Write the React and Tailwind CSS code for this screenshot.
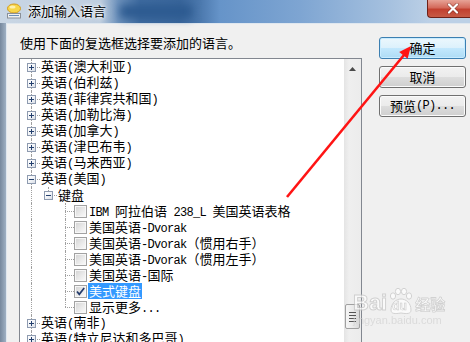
import React from "react";

const MONO = "font-['Liberation_Mono',monospace] text-[12px] leading-[16px] tracking-[-0.7px]";

function T({ s }) {
  const parts = s.split(/([\x20-\x7e]+)/).filter(Boolean);
  return parts.map((p, i) =>
    /^[\x20-\x7e]+$/.test(p) ? (
      <span key={i} className={MONO}>{p}</span>
    ) : (
      <span key={i}>{p}</span>
    )
  );
}

function Cell({ v, h, exp }) {
  return (
    <span className="relative w-[17px] h-[16px] shrink-0">
      {v === "full" && <span className="absolute left-[8px] top-0 bottom-0 border-l border-dotted border-[#a0a0a0]" />}
      {v === "half" && <span className="absolute left-[8px] top-0 h-[8px] border-l border-dotted border-[#a0a0a0]" />}
      {h && <span className="absolute left-[8px] right-0 top-[8px] border-t border-dotted border-[#a0a0a0]" />}
      {exp && (
        <span className="absolute left-[4px] top-[4px] w-[9px] h-[9px] border border-[#8e9bb0] bg-[linear-gradient(135deg,#ffffff_0%,#f2f4f7_50%,#d9dee6_100%)]">
          <span className="absolute left-[1px] top-[3px] w-[5px] h-px bg-[#24406e]" />
          {exp === "+" && <span className="absolute left-[3px] top-[1px] w-px h-[5px] bg-[#24406e]" />}
        </span>
      )}
    </span>
  );
}

function Check({ checked }) {
  return (
    <span className="relative w-[13px] h-[13px] shrink-0 border border-[#a2a2a2] bg-[#f7f7f7]">
      <span className="absolute inset-[1px] bg-[linear-gradient(135deg,#d6d6d6_0%,#e8e8e8_50%,#f8f8f8_100%)]" />
      {checked && (
        <svg className="absolute left-0 top-0" width="11" height="11" viewBox="0 0 11 11">
          <path d="M2 5.5 L4.3 8.3 L9.2 2" fill="none" stroke="#223a6a" strokeWidth="1.7" />
        </svg>
      )}
    </span>
  );
}

const roots1 = ["英语(澳大利亚)", "英语(伯利兹)", "英语(菲律宾共和国)", "英语(加勒比海)", "英语(加拿大)", "英语(津巴布韦)", "英语(马来西亚)"];
const leaves = [
  "IBM 阿拉伯语 238_L 美国英语表格",
  "美国英语-Dvorak",
  "美国英语-Dvorak（惯用右手）",
  "美国英语-Dvorak（惯用左手）",
  "美国英语-国际",
  "美式键盘",
  "显示更多...",
];
const roots2 = ["英语(南非)", "英语(特立尼达和多巴哥)"];

function RootRow({ text, open }) {
  return (
    <div className="flex items-center h-[16px] shrink-0">
      <Cell v="full" h exp={open ? "-" : "+"} />
      <span className="ml-[1px] leading-[16px] whitespace-nowrap"><T s={text} /></span>
    </div>
  );
}

function Button({ children, primary }) {
  return (
    <div
      className={
        "w-[87px] h-[22px] rounded-[3px] border flex items-center justify-center leading-[16px] whitespace-nowrap " +
        (primary
          ? "border-[#3c7fb1] bg-[linear-gradient(to_bottom,#ecf7fd_0%,#dcf1fc_50%,#c3e8fd_51%,#aedcf5_100%)] shadow-[inset_0_0_0_1px_#c8ecff]"
          : "border-[#707070] bg-[linear-gradient(to_bottom,#f2f2f2_0%,#ebebeb_50%,#dddddd_51%,#cfcfcf_100%)] shadow-[inset_0_0_0_1px_#fbfbfb]")
      }
    >
      {children}
    </div>
  );
}

export default function App() {
  return (
    <div className="w-[470px] h-[342px] overflow-hidden relative flex flex-col bg-[#f0f0f0] font-['Noto_Sans_CJK_SC',sans-serif] text-[13px] text-black">
      {/* Title bar */}
      <div className="h-[23px] shrink-0 flex items-start relative bg-[linear-gradient(to_right,#c9d6e4_0px,#bfcedf_100px,#6f93bd_118px,#3f6b9f_140px,#3a669b_180px,#4b78ad_200px,#6694c9_220px,#7ea5d2_300px,#a6c1df_390px,#bcd0e6_430px)]">
        <span className="absolute left-[120px] top-[5px] w-[72px] h-[13px] bg-[#2c5a90] blur-[4px]" />
        <div className="pl-[6px] pt-[3px] relative">
          <svg width="16" height="16" viewBox="0 0 16 16">
            <ellipse cx="8" cy="5.5" rx="6.5" ry="4.5" fill="#f7d64a" stroke="#d39b1c" strokeWidth="1" />
            <ellipse cx="6.5" cy="4" rx="3" ry="1.6" fill="#fdf1b0" />
            <rect x="1.5" y="10.5" width="13" height="4.5" fill="#eef0f2" stroke="#8b9097" strokeWidth="1" />
            <path d="M3 12.5 H13" stroke="#6b8fb8" strokeWidth="1" />
          </svg>
        </div>
        <div className="ml-[6px] mt-[2px] leading-[18px] text-[13px] text-black relative [text-shadow:0_0_5px_#ffffff,0_0_3px_#ffffff]">
          添加输入语言
        </div>
        <div className="ml-auto w-[43px] h-[18px] rounded-bl-[4px] border-l border-b border-[#6e2118] bg-[linear-gradient(to_bottom,#e7a397_0%,#d46a5b_45%,#c2402f_55%,#c75a45_100%)] flex items-center pl-[19px] relative">
          <svg width="12" height="11" viewBox="0 0 12 11">
            <path d="M2 1.5 L10 9.5 M10 1.5 L2 9.5" stroke="#5a1a12" strokeWidth="3.4" strokeLinecap="round" opacity="0.5" />
            <path d="M2 1.5 L10 9.5 M10 1.5 L2 9.5" stroke="#ffffff" strokeWidth="2.2" strokeLinecap="round" />
          </svg>
        </div>
      </div>

      <div className="flex flex-1 min-h-0">
        <div className="w-[6px] shrink-0 bg-[linear-gradient(to_right,#76889d,#9fb0c3)]" />
        <div className="flex-1 min-w-0 flex border-l border-t border-[#dfe7ef] bg-[#f0f0f0]">
          <div className="ml-[12px] pt-[10px] flex flex-col shrink-0">
            <div className="pl-[1px] leading-[17px] h-[17px] whitespace-nowrap">使用下面的复选框选择要添加的语言。</div>
            <div className="mt-[7px] w-[343px] h-[290px] border border-[#828790] bg-white flex">
              <div className="flex-1 pl-[3px] flex flex-col">
                {roots1.map((t) => (
                  <RootRow key={t} text={t} />
                ))}
                <RootRow text="英语(美国)" open />
                <div className="flex items-center h-[16px] shrink-0">
                  <Cell v="full" />
                  <Cell v="half" h exp="-" />
                  <span className="ml-[1px] leading-[16px]">键盘</span>
                </div>
                {leaves.map((t, i) => {
                  const sel = i === 5;
                  return (
                    <div key={t} className="flex items-center h-[16px] shrink-0">
                      <Cell v="full" />
                      <Cell />
                      <Cell v={i === leaves.length - 1 ? "half" : "full"} h />
                      <Check checked={sel} />
                      <span
                        className={
                          "ml-[1px] px-[1px] h-[16px] leading-[16px] whitespace-nowrap " +
                          (sel ? "bg-[#3399ff] text-white" : "")
                        }
                      >
                        <T s={t} />
                      </span>
                    </div>
                  );
                })}
                {roots2.map((t) => (
                  <RootRow key={t} text={t} />
                ))}
              </div>
              {/* Scrollbar */}
              <div className="w-[17px] shrink-0 flex flex-col bg-[linear-gradient(to_right,#e4e4e4_0%,#efefef_30%,#ececec_100%)]">
                <div className="h-[17px] flex justify-center pt-[8px]">
                  <svg width="7" height="4" viewBox="0 0 7 4">
                    <path d="M0 4 L3.5 0 L7 4 Z" fill="#4a4a4a" />
                  </svg>
                </div>
                <div className="h-[228px]" />
                <div className="mx-[1px] h-[25px] rounded-[2px] border border-[#a0a0a0] bg-[linear-gradient(to_right,#f5f5f5_0%,#ebebeb_50%,#d9d9d9_100%)] flex flex-col items-center justify-center gap-[2px]">
                  <span className="w-[7px] h-px bg-[#555555]" />
                  <span className="w-[7px] h-px bg-[#555555]" />
                  <span className="w-[7px] h-px bg-[#555555]" />
                  <span className="w-[7px] h-px bg-[#555555]" />
                </div>
              </div>
            </div>
          </div>
          <div className="ml-[17px] pt-[13px] flex flex-col gap-[7px] shrink-0">
            <Button primary>确定</Button>
            <Button>取消</Button>
            <Button>
              <T s="预览(P)..." />
            </Button>
          </div>
        </div>
      </div>

      {/* Baidu watermark */}
      <div className="absolute left-[353px] top-[287px] pointer-events-none opacity-70">
        <div className="flex items-end">
          <span className="font-['Liberation_Sans',sans-serif] font-bold text-[22px] leading-[24px] text-white [-webkit-text-stroke:1px_#c4c4c4]">Bai</span>
          <span className="relative w-[27px] h-[28px]">
            <svg className="absolute left-0 top-0" width="27" height="28" viewBox="0 0 27 28">
              <g fill="#ffffff" stroke="#c4c4c4" strokeWidth="1">
                <ellipse cx="6" cy="9" rx="2.6" ry="3.2" />
                <ellipse cx="11" cy="4.5" rx="2.6" ry="3.2" />
                <ellipse cx="17" cy="4.5" rx="2.6" ry="3.2" />
                <ellipse cx="22" cy="9" rx="2.6" ry="3.2" />
                <path d="M4 23 C4 16 9 12 14 12 C19 12 24 16 24 23 C24 27 20 27 14 26 C8 27 4 27 4 23 Z" />
              </g>
            </svg>
            <span className="absolute left-[5px] top-[13px] font-['Liberation_Sans',sans-serif] font-bold text-[12px] leading-[13px] text-white [-webkit-text-stroke:0.6px_#bdbdbd]">du</span>
          </span>
          <span className="ml-[1px] font-bold text-[15px] leading-[22px] text-white [-webkit-text-stroke:0.8px_#c4c4c4]">经验</span>
        </div>
        <div className="font-['Liberation_Sans',sans-serif] text-[11px] leading-[12px] text-[#d2d2d2] -mt-[1px]">jingyan.baidu.com</div>
      </div>

      {/* Red arrow annotation */}
      <svg className="absolute left-0 top-0 pointer-events-none" width="470" height="342" viewBox="0 0 470 342">
        <line x1="287" y1="197" x2="404" y2="55" stroke="#ff1414" strokeWidth="2.6" />
        <polygon points="411,46 407.6,58.8 399.2,51.9" fill="#ff1414" />
      </svg>
    </div>
  );
}
